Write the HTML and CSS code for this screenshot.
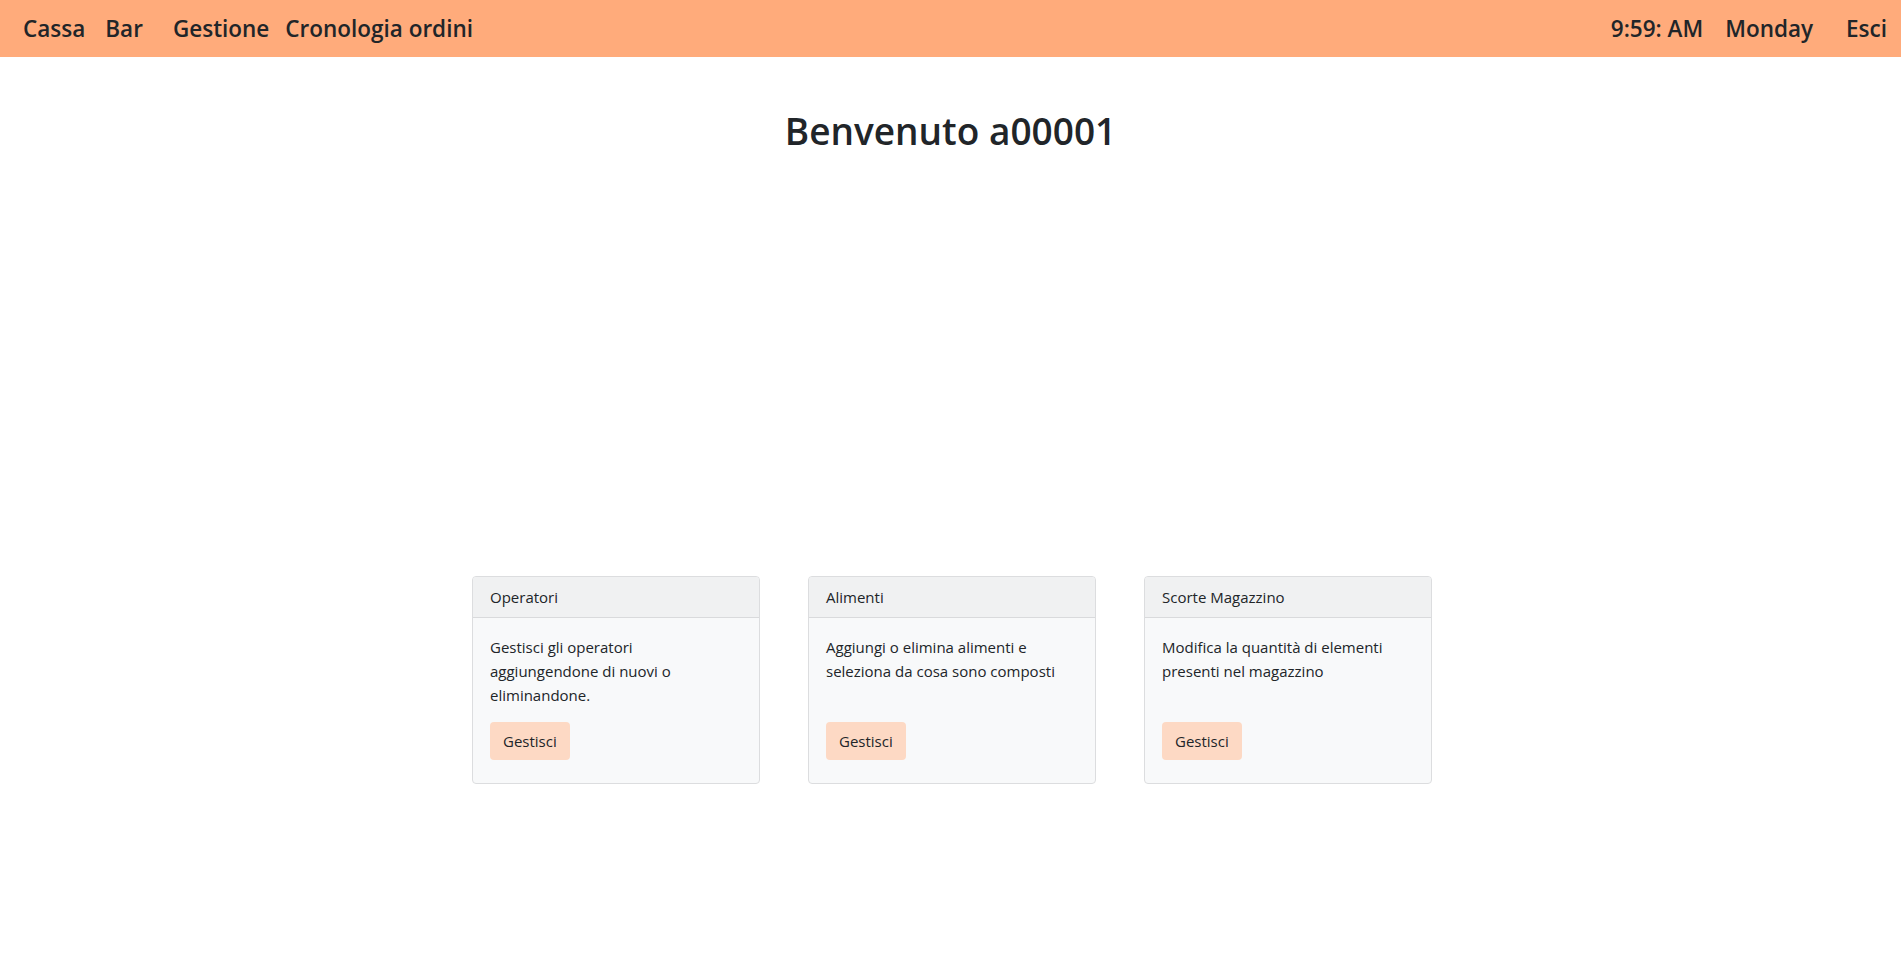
FILE: index.html
```
<!DOCTYPE html>
<html lang="it">
<head>
<meta charset="utf-8">
<title>Gestione</title>
<link rel="stylesheet" href="styles.css">
</head>
<body>
<nav class="topbar">
  <div class="nav-left">
    <a class="nav-link nl-cassa" href="#">Cassa</a>
    <a class="nav-link nl-bar" href="#">Bar</a>
    <a class="nav-link nl-gest" href="#">Gestione</a>
    <a class="nav-link nl-cron" href="#">Cronologia ordini</a>
  </div>
  <div class="nav-right">
    <span class="nav-link nl-time">9:59: AM</span>
    <span class="nav-link nl-day">Monday</span>
    <a class="nav-link nl-esci" href="#">Esci</a>
  </div>
</nav>
<main class="content">
  <h1 class="title">Benvenuto a00001</h1>
  <div class="cards">
    <div class="card">
      <div class="card-header">Operatori</div>
      <div class="card-body">
        <p class="card-text">Gestisci gli operatori aggiungendone di nuovi o eliminandone.</p>
        <a class="btn" href="#">Gestisci</a>
      </div>
    </div>
    <div class="card">
      <div class="card-header">Alimenti</div>
      <div class="card-body">
        <p class="card-text">Aggiungi o elimina alimenti e seleziona da cosa sono composti</p>
        <a class="btn" href="#">Gestisci</a>
      </div>
    </div>
    <div class="card">
      <div class="card-header">Scorte Magazzino</div>
      <div class="card-body">
        <p class="card-text">Modifica la quantità di elementi presenti nel magazzino</p>
        <a class="btn" href="#">Gestisci</a>
      </div>
    </div>
  </div>
</main>
</body>
</html>
```
FILE: styles.css
```
* { box-sizing: border-box; }
html, body { margin: 0; padding: 0; }
body {
  font-family: "Open Sans", "Liberation Sans", sans-serif;
  color: #212529;
  background: #ffffff;
}
.topbar {
  height: 57px;
  background: #ffab7b;
  display: flex;
  align-items: center;
  justify-content: space-between;
  padding: 0 14px 0 23px;
}
.nav-left, .nav-right { display: flex; align-items: center; }
.nav-link {
  color: #212529;
  text-decoration: none;
  font-size: 22.5px;
  font-weight: 600;
  line-height: 30px;
}
.nl-bar { margin-left: 20px; }
.nl-gest { margin-left: 30px; }
.nl-cron { margin-left: 16px; }
.nl-day { margin-left: 22px; }
.nl-esci { margin-left: 33px; }
.content { display: flex; flex-direction: column; align-items: center; }
.title {
  margin: 52px 0 0;
  font-size: 37px;
  font-weight: 600;
  line-height: 44px;
}
.cards {
  margin-top: 423px;
  padding-left: 3px;
  display: flex;
  gap: 48px;
  justify-content: center;
}
.card {
  width: 288px;
  height: 208px;
  background: #f8f9fa;
  border: 1px solid #dcdddf;
  border-radius: 4px;
  display: flex;
  flex-direction: column;
  overflow: hidden;
}
.card-header {
  height: 41px;
  padding: 0 17px;
  background: #f0f1f2;
  border-bottom: 1px solid #d9dadc;
  font-size: 15px;
  line-height: 40px;
}
.card-body {
  flex: 1;
  display: flex;
  flex-direction: column;
  align-items: flex-start;
  padding: 17px 17px 23px;
}
.card-text {
  margin: 0;
  font-size: 15px;
  line-height: 24px;
}
.btn {
  margin-top: auto;
  height: 38px;
  padding: 0 13px;
  background: #fdd9c4;
  border-radius: 4px;
  color: #212529;
  text-decoration: none;
  font-size: 15px;
  line-height: 38px;
}
```
